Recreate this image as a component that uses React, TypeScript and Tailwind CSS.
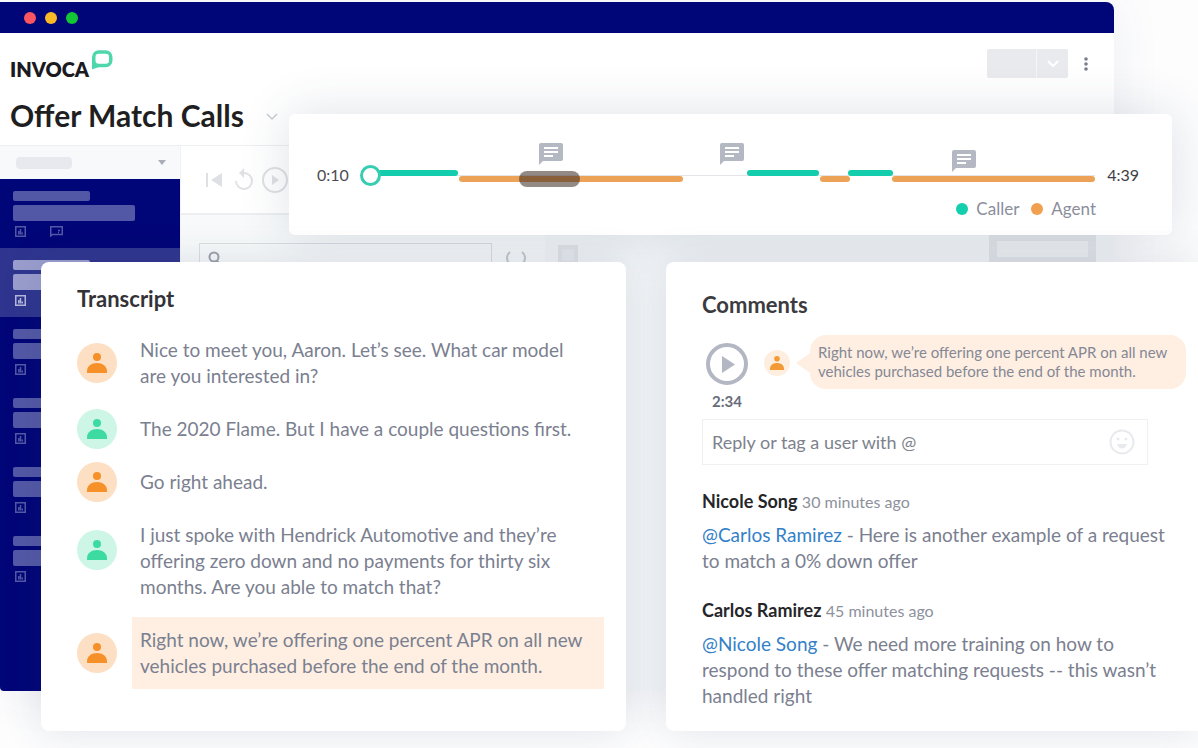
import React from 'react';

type Speaker = 'agent' | 'caller';

const TRANSCRIPT: { speaker: Speaker; text: string; active?: boolean }[] = [
    { speaker: 'agent', text: 'Nice to meet you, Aaron. Let’s see. What car model are you interested in?' },
    { speaker: 'caller', text: 'The 2020 Flame. But I have a couple questions first.' },
    { speaker: 'agent', text: 'Go right ahead.' },
    {
        speaker: 'caller',
        text: 'I just spoke with Hendrick Automotive and they’re offering zero down and no payments for thirty six months. Are you able to match that?',
    },
    {
        speaker: 'agent',
        text: 'Right now, we’re offering one percent APR on all new vehicles purchased before the end of the month.',
        active: true,
    },
];

const COMMENTS = [
    {
        author: 'Nicole Song',
        time: '30 minutes ago',
        mention: '@Carlos Ramirez',
        text: 'Here is another example of a request to match a 0% down offer',
    },
    {
        author: 'Carlos Ramirez',
        time: '45 minutes ago',
        mention: '@Nicole Song',
        text: 'We need more training on how to respond to these offer matching requests -- this wasn’t handled right',
    },
];

// start and length are percentages of the call
const SEGMENTS: { speaker: Speaker; start: number; length: number }[] = [
    { speaker: 'caller', start: 1.4, length: 11.9 },
    { speaker: 'agent', start: 13.4, length: 30.5 },
    { speaker: 'caller', start: 52.6, length: 9.8 },
    { speaker: 'agent', start: 62.6, length: 4 },
    { speaker: 'caller', start: 66.4, length: 6.1 },
    { speaker: 'agent', start: 72.4, length: 27.6 },
];

const MARKERS = [
    { at: 24.4, low: false },
    { at: 49, low: false },
    { at: 80.5, low: true },
];

function PersonIcon({ className }: { className: string }) {
    return (
        <svg viewBox="0 0 20 20" className={className} fill="currentColor" aria-hidden>
            <circle cx="10" cy="4" r="4" />
            <path d="M0 20v-1.500C0 13 4.500 10 10 10s10 3 10 8.500V20z" />
        </svg>
    );
}

function Avatar({ speaker }: { speaker: Speaker }) {
    return (
        <span
            className={`flex size-10 items-center justify-center rounded-full ${
                speaker === 'agent' ? 'bg-[#fddfc3] text-[#f6912a]' : 'bg-[#cdf6e6] text-[#3ddba2]'
            }`}
        >
            <PersonIcon className="size-5" />
        </span>
    );
}

function CommentIcon({ className }: { className: string }) {
    return (
        <svg viewBox="0 0 24 22" className={className} aria-hidden>
            <path d="M2 0h20a2 2 0 0 1 2 2v14a2 2 0 0 1-2 2H4l-4 4V2a2 2 0 0 1 2-2z" fill="#b4b8c3" />
            <path d="M5 5h14M5 9h14M5 13h9" stroke="#fff" strokeWidth="2" />
        </svg>
    );
}

function CallItem({ active, chat }: { active?: boolean; chat?: boolean }) {
    return (
        <li className={`h-[69px] px-[13px] pt-3 ${active ? 'bg-[#2f358f] text-[#b5b8dc]' : 'text-[#5358a6]'}`}>
            <div className={`h-[10px] w-[77px] rounded-[2px] ${active ? 'bg-[#9a9dcd]' : 'bg-[#5358a6]'}`} />
            <div className={`mt-1 h-4 w-[122px] rounded-[2px] ${active ? 'bg-[#9a9dcd]' : 'bg-[#5358a6]'}`} />
            <div className="mt-[5px] flex gap-6 pl-[2px]">
                <svg viewBox="0 0 11 11" className="size-[11px]" fill="none" stroke="currentColor" strokeWidth="1.500" aria-hidden>
                    <path d="M.75.75h9.500v9.500H.75zM3.800 5v3.500M5.500 3v5.500M7.300 6.500v2" />
                </svg>
                {chat && (
                    <svg viewBox="0 0 13 11" className="h-[11px] w-[13px]" fill="none" stroke="currentColor" strokeWidth="1.500" aria-hidden>
                        <path d="M.75 10V.75h11.500V8.500H2.500zM8 4.500h2M8 6.500h1" />
                    </svg>
                )}
            </div>
        </li>
    );
}

function AppWindow() {
    return (
        <div className="absolute inset-x-0 top-[2px] mr-[7%] flex h-[689px] flex-col overflow-hidden rounded-tr-lg rounded-bl bg-white shadow-[0_0_50px_rgba(60,80,110,0.08)]">
            <div className="flex h-[31px] shrink-0 items-center gap-[9px] bg-[#000577] px-6">
                <span className="size-3 rounded-full bg-[#fb5561]" />
                <span className="size-3 rounded-full bg-[#fcb927]" />
                <span className="size-3 rounded-full bg-[#13c636]" />
            </div>
            <header className="flex h-[113px] shrink-0 items-start justify-between border-b border-[#eceef1] pt-4 pr-6 pl-[10px]">
                <div>
                    <div className="flex h-8 items-start">
                        <span className="pt-2 text-[20px] leading-6 font-extrabold text-[#1b1b1f]">INVOCA</span>
                        <svg viewBox="0 0 22 20" className="mt-px ml-[2px] h-5 w-[22px]" aria-hidden>
                            <path d="M1 9v10.500L8 17z" fill="#4dd7ab" />
                            <rect x="2.750" y="2" width="17" height="13.500" rx="5" fill="#fff" stroke="#4dd7ab" strokeWidth="3.500" />
                        </svg>
                    </div>
                    <h1 className="mt-4 flex items-center gap-[22px] text-[30px] leading-9 font-bold text-[#1f1f22]">
                        Offer Match Calls
                        <svg viewBox="0 0 12 8" className="mt-1 h-2 w-3" fill="none" stroke="#c9ccd2" strokeWidth="1.500" aria-hidden>
                            <path d="M1 1l5 5 5-5" />
                        </svg>
                    </h1>
                </div>
                <div className="flex items-center gap-[14px]">
                    <button type="button" aria-label="Actions" className="flex h-[29px] w-[81px] justify-end rounded-[2px] bg-[#e8eaed]">
                        <span className="flex h-full w-8 items-center justify-center border-l border-[#f4f5f7]">
                            <svg viewBox="0 0 12 8" className="h-2 w-3" fill="none" stroke="#fff" strokeWidth="2" aria-hidden>
                                <path d="M1 1l5 5 5-5" />
                            </svg>
                        </span>
                    </button>
                    <button type="button" aria-label="More" className="px-[2px]">
                        <svg viewBox="0 0 4 16" className="h-4 w-1" fill="#7b7f8c" aria-hidden>
                            <circle cx="2" cy="3" r="1.800" />
                            <circle cx="2" cy="8" r="1.800" />
                            <circle cx="2" cy="13" r="1.800" />
                        </svg>
                    </button>
                </div>
            </header>
            <div className="flex min-h-0 grow">
                <aside className="flex w-[180px] shrink-0 flex-col">
                    <div className="flex h-[33px] shrink-0 items-center justify-between bg-[#f8f9fb] pr-[14px] pl-4">
                        <span className="h-3 w-14 rounded-[4px] bg-[#e8e9ee]" />
                        <svg viewBox="0 0 8 5" className="h-[5px] w-2" fill="#a9adb8" aria-hidden>
                            <path d="M0 0h8L4 5z" />
                        </svg>
                    </div>
                    <ul className="grow bg-[#000577]">
                        <CallItem chat />
                        <CallItem active />
                        <CallItem />
                        <CallItem />
                        <CallItem />
                        <CallItem />
                    </ul>
                </aside>
                <main className="flex grow flex-col border-l border-[#f1f2f5]">
                    <div className="flex h-[69px] shrink-0 items-center gap-3 border-b-2 border-[#eceef0] pl-[25px]">
                        <svg viewBox="0 0 16 14" className="h-[14px] w-4" fill="#dfe0e4" aria-hidden>
                            <path d="M0 0h2v14H0zM16 0v14L5 7z" />
                        </svg>
                        <svg viewBox="0 0 20 24" className="h-6 w-5" fill="none" stroke="#e0e1e5" strokeWidth="2" aria-hidden>
                            <path d="M2 13a8 8 0 1 0 8-8H7" />
                            <path d="M10 0v10L5 5z" fill="#e0e1e5" stroke="none" />
                        </svg>
                        <svg viewBox="0 0 26 26" className="-ml-1 size-[26px]" fill="none" stroke="#dfe0e4" strokeWidth="2" aria-hidden>
                            <circle cx="13" cy="13" r="12" />
                            <path d="M10 8v10l7-5z" fill="#dfe0e4" stroke="none" />
                        </svg>
                    </div>
                    <div className="flex grow bg-[#f7f9fa]">
                        <div className="flex w-[364px] shrink-0 items-start gap-3 pt-7 pl-[18px]">
                            <div className="flex h-8 w-[293px] items-center border border-[#dadee2] px-2">
                                <svg viewBox="0 0 14 16" className="h-4 w-[14px]" fill="none" stroke="#9ba0ac" strokeWidth="2" aria-hidden>
                                    <circle cx="6" cy="6" r="4.500" />
                                    <path d="M9 10l4 4" />
                                </svg>
                            </div>
                            <svg viewBox="0 0 24 16" className="mt-2 h-4 w-6" fill="none" stroke="#c3c8ce" strokeWidth="2" aria-hidden>
                                <path d="M6 1C2 4 2 10 6 13M18 1c4 3 4 9 0 12" />
                            </svg>
                        </div>
                        <div className="flex grow items-start justify-between bg-[#f3f6f8] pt-[30px] pr-[18px] pl-[13px]">
                            <span className="size-5 border-4 border-[#e2e5e9] bg-[#e9ecef]" />
                            <span className="-mt-3 h-8 w-[107px] border-8 border-[#e2e5e9] bg-[#eef1f3]" />
                        </div>
                    </div>
                </main>
            </div>
        </div>
    );
}

function Player() {
    return (
        <section className="mr-[26px] ml-[289px] rounded-md bg-white pt-7 pr-[33px] pb-[14px] pl-7 shadow-[0_0_50px_rgba(50,70,100,0.16)]">
            <div className="flex items-center">
                <span className="w-[43px] text-base leading-6 text-[#4c4c52]">0:10</span>
                <div className="relative h-[66px] grow">
                    <div className="absolute inset-x-0 top-[33px] h-px bg-[#e3e5e8]" />
                    {SEGMENTS.map((s) => (
                        <span
                            key={s.start}
                            className={`absolute h-[6px] rounded-full ${s.speaker === 'caller' ? 'top-[28px] bg-[#14cdac]' : 'top-[34px] bg-[#eca357]'}`}
                            style={{ left: `${s.start}%`, width: `${s.length}%` }}
                        />
                    ))}
                    <span className="absolute top-[29px] left-[21.6%] h-4 w-[8.3%] rounded-full bg-[#3a2a22]/55" />
                    {MARKERS.map((m) => (
                        <span key={m.at} className={`absolute ${m.low ? 'top-2' : 'top-px'}`} style={{ left: `${m.at}%` }}>
                            <CommentIcon className="h-[22px] w-6" />
                        </span>
                    ))}
                    <input
                        type="range"
                        aria-label="Call position"
                        defaultValue={0}
                        className="absolute inset-x-0 top-[23px] h-[21px] w-full cursor-pointer appearance-none bg-transparent [&::-webkit-slider-thumb]:size-[21px] [&::-webkit-slider-thumb]:appearance-none [&::-webkit-slider-thumb]:rounded-full [&::-webkit-slider-thumb]:border-3 [&::-webkit-slider-thumb]:border-solid [&::-webkit-slider-thumb]:border-[#37cdb3] [&::-webkit-slider-thumb]:bg-white"
                    />
                </div>
                <span className="pl-3 text-base leading-6 text-[#3d3d43]">4:39</span>
            </div>
            <div className="-mt-[11px] flex justify-end gap-3 pr-[43px] text-[17px] leading-6 text-[#8a8e9b]">
                <span className="flex items-center gap-2">
                    <span className="size-3 rounded-full bg-[#14cfae]" />
                    Caller
                </span>
                <span className="flex items-center gap-2">
                    <span className="size-3 rounded-full bg-[#f0a04f]" />
                    Agent
                </span>
            </div>
        </section>
    );
}

function Transcript() {
    return (
        <section className="rounded-lg bg-white pt-[25px] pr-[22px] pb-[52px] pl-9 shadow-[0_0_40px_rgba(50,70,100,0.14)]">
            <h2 className="text-[22px] leading-6 font-bold text-[#333337]">Transcript</h2>
            <ul className="mt-[26px] flex flex-col gap-[27px]">
                {TRANSCRIPT.map((line) => (
                    <li key={line.text} className={`flex gap-[15px] ${line.text.length > 110 ? 'items-start' : 'items-center'}`}>
                        <span className={`shrink-0 ${line.text.length > 110 ? 'mt-2' : '-my-[7px]'}`}>
                            <Avatar speaker={line.speaker} />
                        </span>
                        <p
                            className={`grow pr-4 pl-2 text-[19px] leading-[26px] text-[#7b8090] ${
                                line.active ? '-my-[10px] bg-[#feefe2] py-[10px]' : ''
                            }`}
                        >
                            {line.text}
                        </p>
                    </li>
                ))}
            </ul>
        </section>
    );
}

function Comments() {
    return (
        <section className="rounded-l-lg bg-white pt-[31px] pr-3 pb-[22px] pl-9 shadow-[0_0_40px_rgba(50,70,100,0.14)]">
            <h2 className="text-[22px] leading-6 font-bold text-[#3b3b40]">Comments</h2>
            <div className="mt-[18px] flex items-start">
                <div className="flex w-[50px] shrink-0 flex-col items-center gap-1 pt-2">
                    <button type="button" aria-label="Play clip" className="size-[42px] cursor-pointer">
                        <svg viewBox="0 0 42 42" className="size-[42px]" aria-hidden>
                            <circle cx="21" cy="21" r="19" fill="none" stroke="#b2b7c3" strokeWidth="4" />
                            <path d="M16 13v17l13-8.500z" fill="#b2b7c3" />
                        </svg>
                    </button>
                    <span className="text-[15px] leading-6 font-bold text-[#676c7a]">2:34</span>
                </div>
                <span className="mt-[15px] ml-3 flex size-[26px] shrink-0 items-center justify-center rounded-full bg-[#feeedf] text-[#f39a35]">
                    <PersonIcon className="size-[14px]" />
                </span>
                <svg viewBox="0 0 14 20" className="mt-[18px] ml-[6px] h-5 w-[14px] shrink-0" fill="#feefe2" aria-hidden>
                    <path d="M0 10L14 0v20z" />
                </svg>
                <p className="grow rounded-2xl bg-[#feefe2] px-2 py-2 text-[15px] leading-[19px] text-[#858895]">
                    Right now, we’re offering one percent APR on all new vehicles purchased before the end of the month.
                </p>
            </div>
            <div className="mt-[6px] mr-[38px] flex h-[46px] items-center border border-[#eff0f2] pr-3 pl-[9px]">
                <input
                    type="text"
                    aria-label="Reply"
                    placeholder="Reply or tag a user with @"
                    className="min-w-0 grow text-[18px] leading-6 outline-none placeholder:text-[#7d828d]"
                />
                <button type="button" aria-label="Insert emoji" className="cursor-pointer">
                    <svg viewBox="0 0 26 26" className="size-[26px]" fill="none" stroke="#e8eaee" strokeWidth="2" aria-hidden>
                        <circle cx="13" cy="13" r="11.500" />
                        <path d="M8 15c1 3.500 3 4.500 5 4.500s4-1 5-4.500z" fill="#e8eaee" stroke="none" />
                        <circle cx="9" cy="10" r="1.500" fill="#e8eaee" stroke="none" />
                        <circle cx="17" cy="10" r="1.500" fill="#e8eaee" stroke="none" />
                    </svg>
                </button>
            </div>
            {COMMENTS.map((c) => (
                <article key={c.author} className="mt-6">
                    <h3 className="text-[18px] leading-6 font-bold text-[#26262a]">
                        {c.author} <span className="text-base font-normal text-[#8d919d]">{c.time}</span>
                    </h3>
                    <p className="mt-2 text-[19px] leading-[26px] text-[#7b8090]">
                        <a href="#" className="text-[#3481c8]">
                            {c.mention}
                        </a>
                        {` - ${c.text}`}
                    </p>
                </article>
            ))}
        </section>
    );
}

export default function App(): React.ReactElement {
    return (
        <div className="relative overflow-hidden bg-[#fdfdfe] pb-[17px] font-['Lato',sans-serif]">
            <AppWindow />
            <div className="relative pt-[114px]">
                <Player />
                <div className="mt-[27px] ml-[41px] grid grid-cols-[585fr_532fr] gap-10">
                    <Transcript />
                    <Comments />
                </div>
            </div>
        </div>
    );
}
